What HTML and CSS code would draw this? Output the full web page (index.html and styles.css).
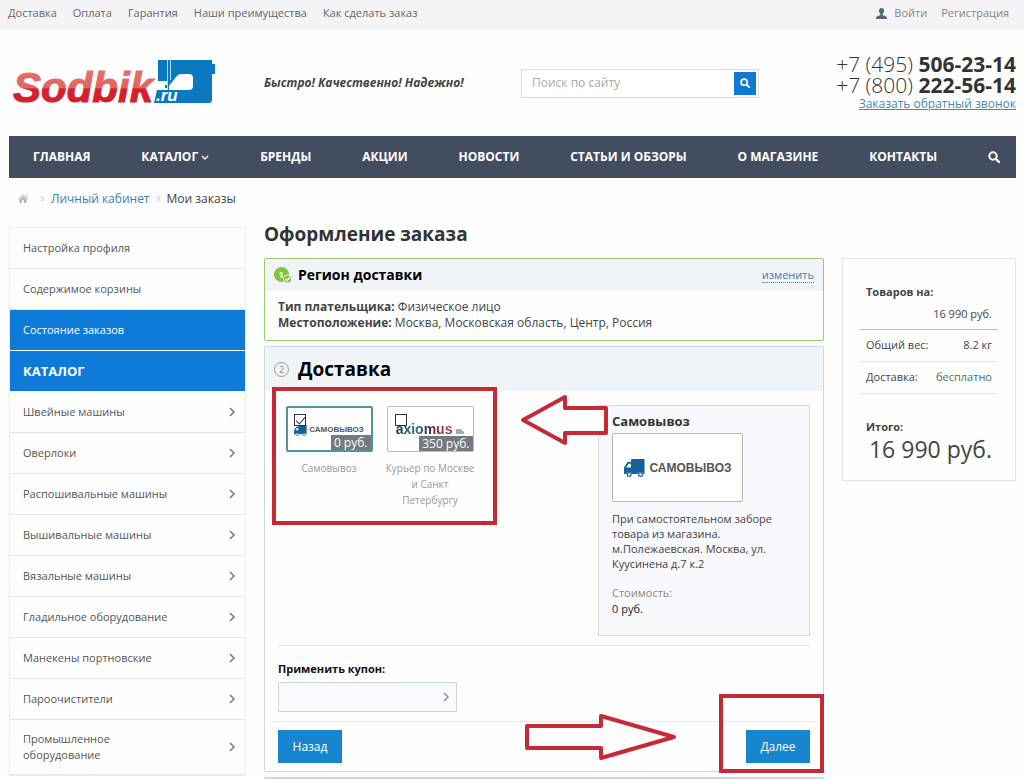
FILE: index.html
```html
<!DOCTYPE html>
<html lang="ru">
<head>
<meta charset="utf-8">
<meta name="viewport" content="width=device-width, initial-scale=1">
<title>Оформление заказа — Sodbik.ru</title>
<link rel="stylesheet" href="styles.css">
</head>
<body>
<svg class="sprite" aria-hidden="true">
  <symbol id="chevron" viewBox="0 0 8 10"><path d="M2 1l4 4-4 4" fill="none" stroke="currentColor" stroke-width="1.5"/></symbol>
  <symbol id="search" viewBox="0 0 12 12"><circle cx="5" cy="5" r="3.7" fill="none" stroke="currentColor" stroke-width="2"/><path d="M8 8l3 3" stroke="currentColor" stroke-width="2.4" stroke-linecap="round"/></symbol>
  <symbol id="truck" viewBox="0 0 21 18"><path d="M8 0h12.500v15h-1.200a3 3 0 0 0-5.600 0H8a3 3 0 0 0-5.600 0H0V8.500L3.500 3H7V1q0-1 1-1zM4.500 4.800L2.200 8.500H7V4.800z" fill="#15629b" fill-rule="evenodd"/><circle cx="5.200" cy="15.500" r="1.900" fill="#fff" stroke="#15629b" stroke-width="1.200"/><circle cx="16.500" cy="15.500" r="1.900" fill="#fff" stroke="#15629b" stroke-width="1.200"/></symbol>
</svg>

<div class="topbar">
  <nav class="topbar-links">
    <a href="#">Доставка</a><a href="#">Оплата</a><a href="#">Гарантия</a><a href="#">Наши преимущества</a><a href="#">Как сделать заказ</a>
  </nav>
  <div class="topbar-user">
    <svg width="11" height="11" viewBox="0 0 11 11" aria-hidden="true"><path d="M5.500 0C7 0 8 1 8 2.600c0 1.500-.6 2.800-1.400 3.500v.9c.8.600 4.400.9 4.400 3.200V11H0v-.8C0 7.900 3.600 7.600 4.400 7v-.9C3.600 5.400 3 4.100 3 2.600 3 1 4 0 5.500 0z" fill="#4f6a70"/></svg>
    <a href="#">Войти</a><a href="#">Регистрация</a>
  </div>
</div>

<header class="header">
  <a class="logo" href="#" aria-label="Sodbik.ru">
    <svg width="208" height="60" viewBox="0 -5 208 60">
      <defs><linearGradient id="red" gradientUnits="userSpaceOnUse" x1="0" y1="12" x2="0" y2="45"><stop offset="0" stop-color="#e27067"/><stop offset=".54" stop-color="#e0665f"/><stop offset=".57" stop-color="#d5202c"/><stop offset="1" stop-color="#d5202c"/></linearGradient></defs>
      <path d="M150 2h54v4h3v10h-3v27l-2 2h-56l3-13h10v-2h-2v-3h2v-4h-9z" fill="#0b79bf"/>
      <path d="M161 32v-4l7-9q2-3 5-3h8q4 0 4 4v8q0 4-4 4z" fill="#fff"/>
      <path d="M159.500 2v30M162.500 2v20" stroke="#b9dcf0" stroke-width="1"/>
      <text x="5" y="44" class="logo-name" fill="url(#red)" stroke="url(#red)">Sodbik</text>
      <text x="148" y="43" class="logo-zone">.ru</text>
    </svg>
  </a>
  <p class="slogan">Быстро! Качественно! Надежно!</p>
  <form class="search">
    <input type="search" placeholder="Поиск по сайту" aria-label="Поиск по сайту">
    <button type="button" aria-label="Найти"><svg width="10" height="10"><use href="#search"/></svg></button>
  </form>
  <div class="phones">
    <div>+7 (495) <b>506-23-14</b></div>
    <div>+7 (800) <b>222-56-14</b></div>
    <a href="#">Заказать обратный звонок</a>
  </div>
</header>

<div class="page">
  <nav class="mainnav">
    <a href="#">Главная</a>
    <a href="#">Каталог <svg width="8" height="6" viewBox="0 0 8 6"><path d="M1 1l3 3 3-3" fill="none" stroke="currentColor" stroke-width="1.300"/></svg></a>
    <a href="#">Бренды</a>
    <a href="#">Акции</a>
    <a href="#">Новости</a>
    <a href="#">Статьи и обзоры</a>
    <a href="#">О магазине</a>
    <a href="#">Контакты</a>
    <button type="button" aria-label="Поиск"><svg width="12" height="12"><use href="#search"/></svg></button>
  </nav>

  <nav class="crumbs">
    <a class="home" href="#" aria-label="Главная"><svg width="10" height="9" viewBox="0 0 10 9"><path d="M5 .5L10 5l-.7.700L5 2 .7 5.700 0 5zM8 .8h1.200v2.500L8 2.200zM5 2.800l3.500 3V9H6V6.300H4V9H1.500V5.800z" fill="#b3b7ba"/></svg></a>
    <svg class="sep" width="5" height="7"><use href="#chevron"/></svg>
    <a href="#">Личный кабинет</a>
    <svg class="sep" width="5" height="7"><use href="#chevron"/></svg>
    <span>Мои заказы</span>
  </nav>

  <div class="columns">
    <aside class="sidebar">
      <ul>
        <li><a href="#">Настройка профиля</a></li>
        <li><a href="#">Содержимое корзины</a></li>
        <li><a class="active" href="#">Состояние заказов</a></li>
        <li><a class="heading" href="#">Каталог</a></li>
        <li><a href="#">Швейные машины<svg width="8" height="10"><use href="#chevron"/></svg></a></li>
        <li><a href="#">Оверлоки<svg width="8" height="10"><use href="#chevron"/></svg></a></li>
        <li><a href="#">Распошивальные машины<svg width="8" height="10"><use href="#chevron"/></svg></a></li>
        <li><a href="#">Вышивальные машины<svg width="8" height="10"><use href="#chevron"/></svg></a></li>
        <li><a href="#">Вязальные машины<svg width="8" height="10"><use href="#chevron"/></svg></a></li>
        <li><a href="#">Гладильное оборудование<svg width="8" height="10"><use href="#chevron"/></svg></a></li>
        <li><a href="#">Манекены портновские<svg width="8" height="10"><use href="#chevron"/></svg></a></li>
        <li><a href="#">Пароочистители<svg width="8" height="10"><use href="#chevron"/></svg></a></li>
        <li><a href="#">Промышленное<br>оборудование<svg width="8" height="10"><use href="#chevron"/></svg></a></li>
      </ul>
    </aside>

    <main class="checkout">
      <h1>Оформление заказа</h1>
      <section class="step done">
        <header class="step-head">
          <svg width="19" height="17" viewBox="0 0 19 17" aria-hidden="true"><circle cx="7.500" cy="7.500" r="7.500" fill="#82c341"/><text x="7" y="11" class="step-num">1</text><circle cx="13.500" cy="12" r="4.500" fill="#f0f4f7"/><circle cx="13.500" cy="12" r="3.600" fill="#82c341"/><path d="M11.500 11.800l1.600 1.700 3-3.300" fill="none" stroke="#fff" stroke-width="1.300"/></svg>
          <h2>Регион доставки</h2>
          <a class="change" href="#">изменить</a>
        </header>
        <div class="region">
          <p><b>Тип плательщика:</b> Физическое лицо</p>
          <p><b>Местоположение:</b> Москва, Московская область, Центр, Россия</p>
        </div>
      </section>

      <section class="step current">
        <header class="step-head">
          <span class="num">2</span>
          <h2>Доставка</h2>
        </header>
        <div class="delivery">
          <div class="options">
            <label class="option">
              <span class="card selected">
                <input type="checkbox" checked>
                <span class="pickup"><svg width="13" height="11"><use href="#truck"/></svg>САМОВЫВОЗ</span>
                <span class="price">0 руб.</span>
              </span>
              Самовывоз
            </label>
            <label class="option">
              <span class="card">
                <input type="checkbox">
                <span class="axiomus">axiomus <svg width="8" height="6" viewBox="0 0 8 6"><path d="M0 1h5l3 3v2H0z" fill="#a5a9b3"/></svg></span>
                <span class="price">350 руб.</span>
              </span>
              Курьер по Москве и&nbsp;Санкт Петербургу
            </label>
            <span class="mark mark-options"></span>
          </div>
          <aside class="details">
            <h3>Самовывоз</h3>
            <div class="picture"><svg width="21" height="18"><use href="#truck"/></svg>САМОВЫВОЗ</div>
            <p>При самостоятельном заборе товара из магазина. м.Полежаевская. Москва, ул. Куусинена д.7 к.2</p>
            <dl><dt>Стоимость:</dt><dd>0 руб.</dd></dl>
            <svg class="arrow arrow-left" width="90" height="52" viewBox="0 0 90 52"><path d="M3 26L45 3v11h41v25H45v10z"/></svg>
          </aside>
        </div>
        <div class="coupon">
          <label for="coupon">Применить купон:</label>
          <div class="coupon-box">
            <input id="coupon" type="text">
            <button type="button" aria-label="Применить"><svg width="8" height="10"><use href="#chevron"/></svg></button>
          </div>
        </div>
        <footer class="actions">
          <button class="btn" type="button">Назад</button>
          <span class="next">
            <svg class="arrow arrow-right" width="154" height="48" viewBox="0 0 154 48"><path d="M3 13h74V3l73 21-73 21V35H3z"/></svg>
            <button class="btn" type="button">Далее</button>
            <span class="mark mark-next"></span>
          </span>
        </footer>
      </section>
      <section class="step following"></section>
    </main>

    <aside class="summary">
      <div class="goods"><b>Товаров на:</b><span>16 990 руб.</span></div>
      <div class="row"><span>Общий вес:</span><span>8.2 кг</span></div>
      <div class="row"><span>Доставка:</span><span class="free">бесплатно</span></div>
      <div class="total"><b>Итого:</b><span>16 990 руб.</span></div>
    </aside>
  </div>
</div>
</body>
</html>
```

FILE: styles.css
```css
* { box-sizing: border-box; }
body {
  margin: 0;
  background: #fefefe;
  color: #444;
  font: 12px/16px "Open Sans", "Noto Sans", sans-serif;
}
a { color: inherit; text-decoration: none; }
h1, h2, h3, p, ul, dl, dd { margin: 0; padding: 0; }
ul { list-style: none; }
button, input { font: inherit; }
button { padding: 0; border: 0; background: none; cursor: pointer; }
svg { flex: none; }
.sprite { position: absolute; width: 0; height: 0; }

.topbar {
  display: flex;
  justify-content: space-between;
  align-items: center;
  height: 30px;
  padding: 0 15px 4px 8px;
  background: #f4f4f6;
  color: #666;
  font-size: 11px;
}
.topbar-links { display: flex; gap: 16px; }
.topbar-user { display: flex; align-items: center; gap: 14px; color: #7f8689; }
.topbar-user svg { margin-right: -7px; }

.header {
  display: grid;
  grid-template-columns: 237px 238px 238px 1fr;
  column-gap: 19px;
  align-items: center;
  height: 106px;
  padding: 0 8px;
}
.logo { display: block; height: 60px; }
.logo-name { font: italic bold 42px "Liberation Sans", Arial, sans-serif; stroke-width: 1; }
.logo-zone { font: italic bold 17px "Liberation Sans", Arial, sans-serif; fill: #fff; }
.slogan { font-weight: 700; font-style: italic; }
.search {
  display: flex;
  height: 29px;
  padding: 2px;
  border: 1px solid #dcdcdc;
  background: #fff;
}
.search input {
  flex: 1;
  min-width: 0;
  padding: 0 8px;
  border: 0;
  outline: 0;
  background: none;
  color: #444;
}
.search input::placeholder { color: #aaa; opacity: 1; }
.search button { width: 22px; background: #1279d2; color: #fff; line-height: 0; }
.phones { font-size: 21px; line-height: 21px; font-weight: 300; text-align: right; color: #333; white-space: nowrap; }
.phones b { font-weight: 700; }
.phones a { display: block; font-size: 12px; line-height: 16px; font-weight: 400; color: #3d8ab8; text-decoration: underline; }

.page { padding: 0 8px 0 9px; }
.mainnav {
  display: flex;
  justify-content: space-between;
  align-items: center;
  height: 42px;
  padding: 0 16px 0 24px;
  background: #424e60;
  color: #fff;
  font-weight: 700;
  text-transform: uppercase;
}
.mainnav button { color: #fff; line-height: 0; }

.crumbs { display: flex; align-items: center; gap: 6px; height: 41px; padding-left: 9px; }
.crumbs a { color: #3a80b0; }
.crumbs .home { line-height: 0; margin-right: 6px; }
.crumbs .sep { color: #aaa; }

.columns {
  display: grid;
  grid-template-columns: 237px minmax(0, 1fr) 174px;
  column-gap: 18px;
  align-items: start;
  padding-top: 8px;
}
.sidebar { border: 1px solid #ededed; }
.sidebar a {
  display: flex;
  justify-content: space-between;
  align-items: center;
  min-height: 41px;
  padding: 11px 9px 11px 13px;
  border-bottom: 1px solid #e6e6e6;
  color: #555;
  font-size: 11px;
}
.sidebar svg { color: #777; }
.sidebar .active, .sidebar .heading { background: #0f7bd9; color: #fff; border-bottom-color: #fff; }
.sidebar .heading { font-weight: 700; font-size: 13px; text-transform: uppercase; }

h1 { font-size: 19px; line-height: 24px; color: #333; margin: -5px 0 12px; }
.step { border: 1px solid #c5dbe2; border-radius: 2px; margin-bottom: 5px; background: #fefefe; }
.step.done { border-color: #9ccb6c; }
.step-head { display: flex; align-items: center; background: #f0f4f7; padding: 0 9px; color: #000; height: 32px; }
.step-head svg { margin-right: 5px; }
.step-head h2 { font-size: 14px; line-height: 20px; }
.change { margin-left: auto; font-size: 11px; line-height: 14px; color: #3a80b0; border-bottom: 1px dotted #3a80b0; }
.step-num { font-size: 9px; font-weight: 700; fill: #fff; text-anchor: middle; }
.region { padding: 8px 13px 9px; }
.current .step-head { height: 44px; }
.current h2 { font-size: 19px; line-height: 24px; }
.num {
  width: 15px;
  height: 15px;
  margin-right: 9px;
  border: 1px solid #999;
  border-radius: 50%;
  color: #888;
  font-size: 9px;
  line-height: 13px;
  text-align: center;
}

.delivery {
  display: flex;
  justify-content: space-between;
  align-items: flex-start;
  margin: 0 13px;
  padding: 14px 0 9px;
  border-bottom: 1px solid #e4e4e4;
}
.options { position: relative; display: flex; gap: 9px; padding: 1px 0 0 5px; }
.option { width: 92px; text-align: center; font-size: 10px; color: #999; }
.card {
  position: relative;
  display: flex;
  justify-content: center;
  width: 87px;
  height: 46px;
  margin: 0 auto 8px;
  padding-top: 16px;
  border: 1px solid #bbb;
  border-radius: 2px;
  background: #fff;
}
.card.selected { border: 2px solid #51929d; padding-top: 15px; }
.card input {
  appearance: none;
  position: absolute;
  top: 7px;
  left: 7px;
  width: 12px;
  height: 12px;
  margin: 0;
  border: 1px solid #333;
}
.card.selected input { top: 6px; left: 6px; }
.card input:checked::after {
  content: "";
  position: absolute;
  left: 3px;
  top: 0;
  width: 4px;
  height: 8px;
  border: solid #333;
  border-width: 0 1px 1px 0;
  transform: rotate(40deg);
}
.price {
  position: absolute;
  right: 0;
  bottom: 0;
  padding: 0 3px;
  background: #757b7c;
  color: #fff;
  font-size: 12px;
  line-height: 15px;
}
.pickup { display: flex; align-items: center; gap: 2px; height: 14px; font: bold 8px/14px "Liberation Sans", Arial, sans-serif; color: #555; }
.axiomus {
  height: 14px;
  font: bold 14px/12px "Liberation Sans", Arial, sans-serif;
  color: transparent;
  background: linear-gradient(90deg, #173848, #2b7385 30%, #302a45 48%, #a53643 68%, #913847);
  background-clip: text;
}

.details { position: relative; width: 212px; padding: 8px 14px 18px 13px; border: 1px solid #d5dbe0; background: #f7f9fc; line-height: 15px; }
.details h3 { font-size: 13px; line-height: 15px; color: #333; }
.picture {
  display: flex;
  align-items: center;
  justify-content: center;
  gap: 5px;
  width: 131px;
  height: 69px;
  margin: 4px 0 9px;
  border: 1px solid #b5babf;
  border-radius: 2px;
  background: #fff;
  color: #555;
  font: bold 12px/16px "Liberation Sans", Arial, sans-serif;
}
.details p { font-size: 11px; }
.details dl { margin-top: 14px; font-size: 11px; line-height: 16px; }
.details dt { color: #888; }
.details dd { color: #222; }

.coupon { padding: 15px 13px 9px; }
.coupon label { display: block; font-size: 11px; font-weight: 700; color: #111; }
.coupon-box { display: flex; width: 179px; height: 30px; margin-top: 5px; border: 1px solid #ccd5da; background: #f8fafd; border-radius: 1px; }
.coupon-box input { flex: 1; min-width: 0; border: 0; outline: 0; background: none; }
.coupon-box button { width: 20px; color: #8a9095; line-height: 0; }
.actions { display: flex; justify-content: space-between; margin: 0 5px; padding: 8px; border-top: 1px solid #e4ebee; }
.next { position: relative; }
.btn { width: 64px; height: 33px; background: #1885cf; color: #fff; }

/* callouts drawn over the form */
.mark { position: absolute; border: 4px solid #c72a37; pointer-events: none; }
.mark-options { left: -6px; top: -18px; width: 225px; height: 138px; }
.mark-next { left: -27px; top: -36px; width: 105px; height: 79px; }
.arrow { position: absolute; fill: #fefefe; stroke: #c72a37; stroke-width: 4; stroke-linejoin: round; pointer-events: none; }
.arrow-left { left: -79px; top: -12px; }
.arrow-right { right: 132px; top: -17px; }

.summary { margin-top: 31px; padding: 25px 17px 17px; border: 1px solid #e6e6e6; }
.goods, .total { display: flex; flex-direction: column; padding: 0 6px; }
.goods { gap: 6px; margin-bottom: 0; padding-bottom: 7px; border-bottom: 1px solid #bbb; }
.goods b, .total b { font-size: 11px; line-height: 16px; }
.goods span, .total span { text-align: right; }
.goods span, .row { font-size: 11px; white-space: nowrap; }
.row { display: flex; justify-content: space-between; padding: 7px 6px 8px; border-bottom: 1px solid #e3e3e3; }
.free { color: #3c7c3f; }
.total { padding-top: 25px; }
.total span { font-size: 23px; line-height: 28px; white-space: nowrap; }
```
